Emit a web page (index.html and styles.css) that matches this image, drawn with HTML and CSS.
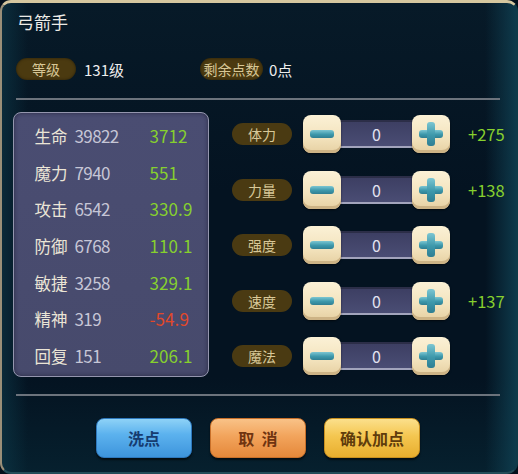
FILE: index.html
```html
<!DOCTYPE html>
<html lang="zh">
<head>
<meta charset="utf-8">
<link rel="stylesheet" href="styles.css">
</head>
<body>
<div class="frame">
  <div class="title">弓箭手</div>
  <div class="info">
    <span class="badge badge-lv">等级</span>
    <span class="info-val lv-val">131级</span>
    <span class="badge badge-pts">剩余点数</span>
    <span class="info-val">0点</span>
  </div>
  <div class="divider"></div>
  <div class="main">
    <div class="stats">
      <div class="srow"><span class="sname">生命<span class="snum">39822</span></span><span class="sadd">3712</span></div>
      <div class="srow"><span class="sname">魔力<span class="snum">7940</span></span><span class="sadd">551</span></div>
      <div class="srow"><span class="sname">攻击<span class="snum">6542</span></span><span class="sadd">330.9</span></div>
      <div class="srow"><span class="sname">防御<span class="snum">6768</span></span><span class="sadd">110.1</span></div>
      <div class="srow"><span class="sname">敏捷<span class="snum">3258</span></span><span class="sadd">329.1</span></div>
      <div class="srow"><span class="sname">精神<span class="snum">319</span></span><span class="sadd neg">-54.9</span></div>
      <div class="srow"><span class="sname">回复<span class="snum">151</span></span><span class="sadd">206.1</span></div>
    </div>
    <div class="controls">
      <div class="crow">
        <span class="clabel">体力</span>
        <div class="stepper"><span class="sbtn minus"><i></i></span><span class="sval">0</span><span class="sbtn plus"><i></i><b></b></span></div>
        <span class="bonus">+275</span>
      </div>
      <div class="crow">
        <span class="clabel">力量</span>
        <div class="stepper"><span class="sbtn minus"><i></i></span><span class="sval">0</span><span class="sbtn plus"><i></i><b></b></span></div>
        <span class="bonus">+138</span>
      </div>
      <div class="crow">
        <span class="clabel">强度</span>
        <div class="stepper"><span class="sbtn minus"><i></i></span><span class="sval">0</span><span class="sbtn plus"><i></i><b></b></span></div>
        <span class="bonus"></span>
      </div>
      <div class="crow">
        <span class="clabel">速度</span>
        <div class="stepper"><span class="sbtn minus"><i></i></span><span class="sval">0</span><span class="sbtn plus"><i></i><b></b></span></div>
        <span class="bonus">+137</span>
      </div>
      <div class="crow">
        <span class="clabel">魔法</span>
        <div class="stepper"><span class="sbtn minus"><i></i></span><span class="sval">0</span><span class="sbtn plus"><i></i><b></b></span></div>
        <span class="bonus"></span>
      </div>
    </div>
  </div>
  <div class="divider div2"></div>
  <div class="actions">
    <button class="act blue">洗点</button>
    <button class="act orange">取&nbsp;&nbsp;消</button>
    <button class="act yellow">确认加点</button>
  </div>
</div>
</body>
</html>
```

FILE: styles.css
```css
html, body {
  margin: 0;
  padding: 0;
  background: #03101c;
  width: 518px;
  height: 474px;
  overflow: hidden;
}

.frame {
  box-sizing: border-box;
  width: 518px;
  height: 474px;
  border-style: solid;
  border-width: 3px 2px 2px 2px;
  border-color: #d6c79f #0f3a48 #234c58 #9a8f78;
  border-radius: 11px;
  background:
    linear-gradient(90deg, rgba(14,60,76,0.55) 0%, rgba(6,22,34,0) 5%, rgba(6,22,34,0) 94%, rgba(16,66,84,0.8) 100%),
    linear-gradient(180deg, #071a28 0%, #041321 40%, #041321 80%, #06202e 100%);
  padding: 9px 16px 0 14px;
  font-family: "Noto Sans CJK SC", "Noto Sans", sans-serif;
  color: #e8e6e0;
}

.title {
  font-size: 17px;
  line-height: 20px;
  height: 20px;
  padding-left: 1px;
  color: #ecebe6;
}

.info {
  margin-top: 26px;
  height: 22px;
  display: flex;
  align-items: center;
}

.badge {
  height: 22px;
  line-height: 22px;
  border-radius: 11px;
  background: #4b3a10;
  color: #d8c796;
  font-size: 14px;
  text-align: center;
  box-shadow: inset 0 0 3px rgba(0,0,0,0.5);
}

.badge-lv {
  width: 60px;
}

.badge-pts {
  width: 63px;
}

.info-val {
  font-size: 15px;
  color: #eeeeee;
  margin-left: 6px;
}

.lv-val {
  margin-left: 8px;
  width: 116px;
}

.divider {
  margin-top: 18px;
  height: 2px;
  width: 484px;
  background: #6c737c;
}

.div2 {
  margin-top: 17px;
}

.main {
  margin-top: 12px;
  height: 265px;
  display: flex;
  margin-left: -3px;
}

.stats {
  flex: 0 0 196px;
  box-sizing: border-box;
  width: 196px;
  height: 265px;
  border: 1.5px solid #9496ae;
  border-radius: 8px;
  background: linear-gradient(180deg, #4a4d72 0%, #474a6c 100%);
  box-shadow: inset 0 0 4px rgba(20,20,40,0.6);
  padding: 4px 0 0 20.5px;
}

.srow {
  height: 36.7px;
  display: grid;
  grid-template-columns: 115px auto;
  align-items: center;
  font-size: 16.5px;
}

.sname {
  color: #ebe5d6;
  white-space: nowrap;
}

.snum {
  color: #c6c6d6;
  margin-left: 7px;
  font-size: 17px;
  letter-spacing: -0.6px;
}

.sadd {
  color: #86d02e;
  font-size: 17px;
  letter-spacing: 0.1px;
}

.sadd.neg {
  color: #e2482a;
}

.controls {
  flex: 0 0 auto;
  margin-left: 23px;
  padding-top: 3px;
  display: flex;
  flex-direction: column;
  gap: 17.5px;
}

.crow {
  height: 38px;
  display: flex;
  align-items: center;
}

.clabel {
  width: 60px;
  height: 22px;
  line-height: 22px;
  border-radius: 11px;
  background: #4a3a12;
  color: #d8c898;
  font-size: 14px;
  text-align: center;
}

.stepper {
  margin-left: 11px;
  display: flex;
  align-items: center;
}

.sbtn {
  position: relative;
  box-sizing: border-box;
  width: 38px;
  height: 38px;
  border-radius: 8px;
  background: linear-gradient(180deg, #fbf1d6 0%, #f3e3bd 60%, #e6d0a2 100%);
  box-shadow: inset 0 -3px 0 #cdb385, 0 1px 2px rgba(0,0,0,0.6);
  z-index: 1;
}

.sbtn i, .sbtn b {
  position: absolute;
  display: block;
  background: linear-gradient(180deg, #7cc6d2 0%, #3d98ab 55%, #2f7e92 100%);
  border-radius: 3px;
}

.minus i {
  left: 7px;
  top: 15px;
  width: 24px;
  height: 8px;
}

.plus i {
  left: 7px;
  top: 15px;
  width: 24px;
  height: 8px;
}

.plus b {
  left: 15px;
  top: 7px;
  width: 8px;
  height: 24px;
}

.sval {
  box-sizing: border-box;
  width: 75px;
  height: 28px;
  margin: 0 -2px;
  background: linear-gradient(180deg, #3d3f63 0%, #4a4d74 100%);
  border-top: 2px solid #2c2e48;
  border-bottom: 2px solid #a2a4bc;
  color: #e2e2f0;
  font-size: 16px;
  line-height: 24px;
  text-align: center;
}

.bonus {
  margin-left: 18px;
  font-size: 16.5px;
  color: #86d02e;
}

.actions {
  margin-top: 22px;
  display: flex;
  justify-content: center;
  gap: 18px;
}

.act {
  width: 96px;
  height: 40px;
  border-radius: 8px;
  border: 1px solid;
  font-family: "Noto Sans CJK SC", "Noto Sans", sans-serif;
  font-size: 16px;
  font-weight: bold;
  padding: 0;
  box-shadow: 0 2px 2px rgba(0,0,0,0.6);
}

.blue {
  background: linear-gradient(180deg, #8ed2f7 0%, #5cb2ee 40%, #3d94dc 100%);
  border-color: #2e78bc;
  color: #163c70;
}

.orange {
  background: linear-gradient(180deg, #f9c287 0%, #f2a45c 45%, #e5883a 100%);
  border-color: #c8702a;
  color: #6f3410;
}

.yellow {
  background: linear-gradient(180deg, #fbe08c 0%, #f4c650 45%, #e8ae2e 100%);
  border-color: #c89020;
  color: #5f3c0c;
}
```
